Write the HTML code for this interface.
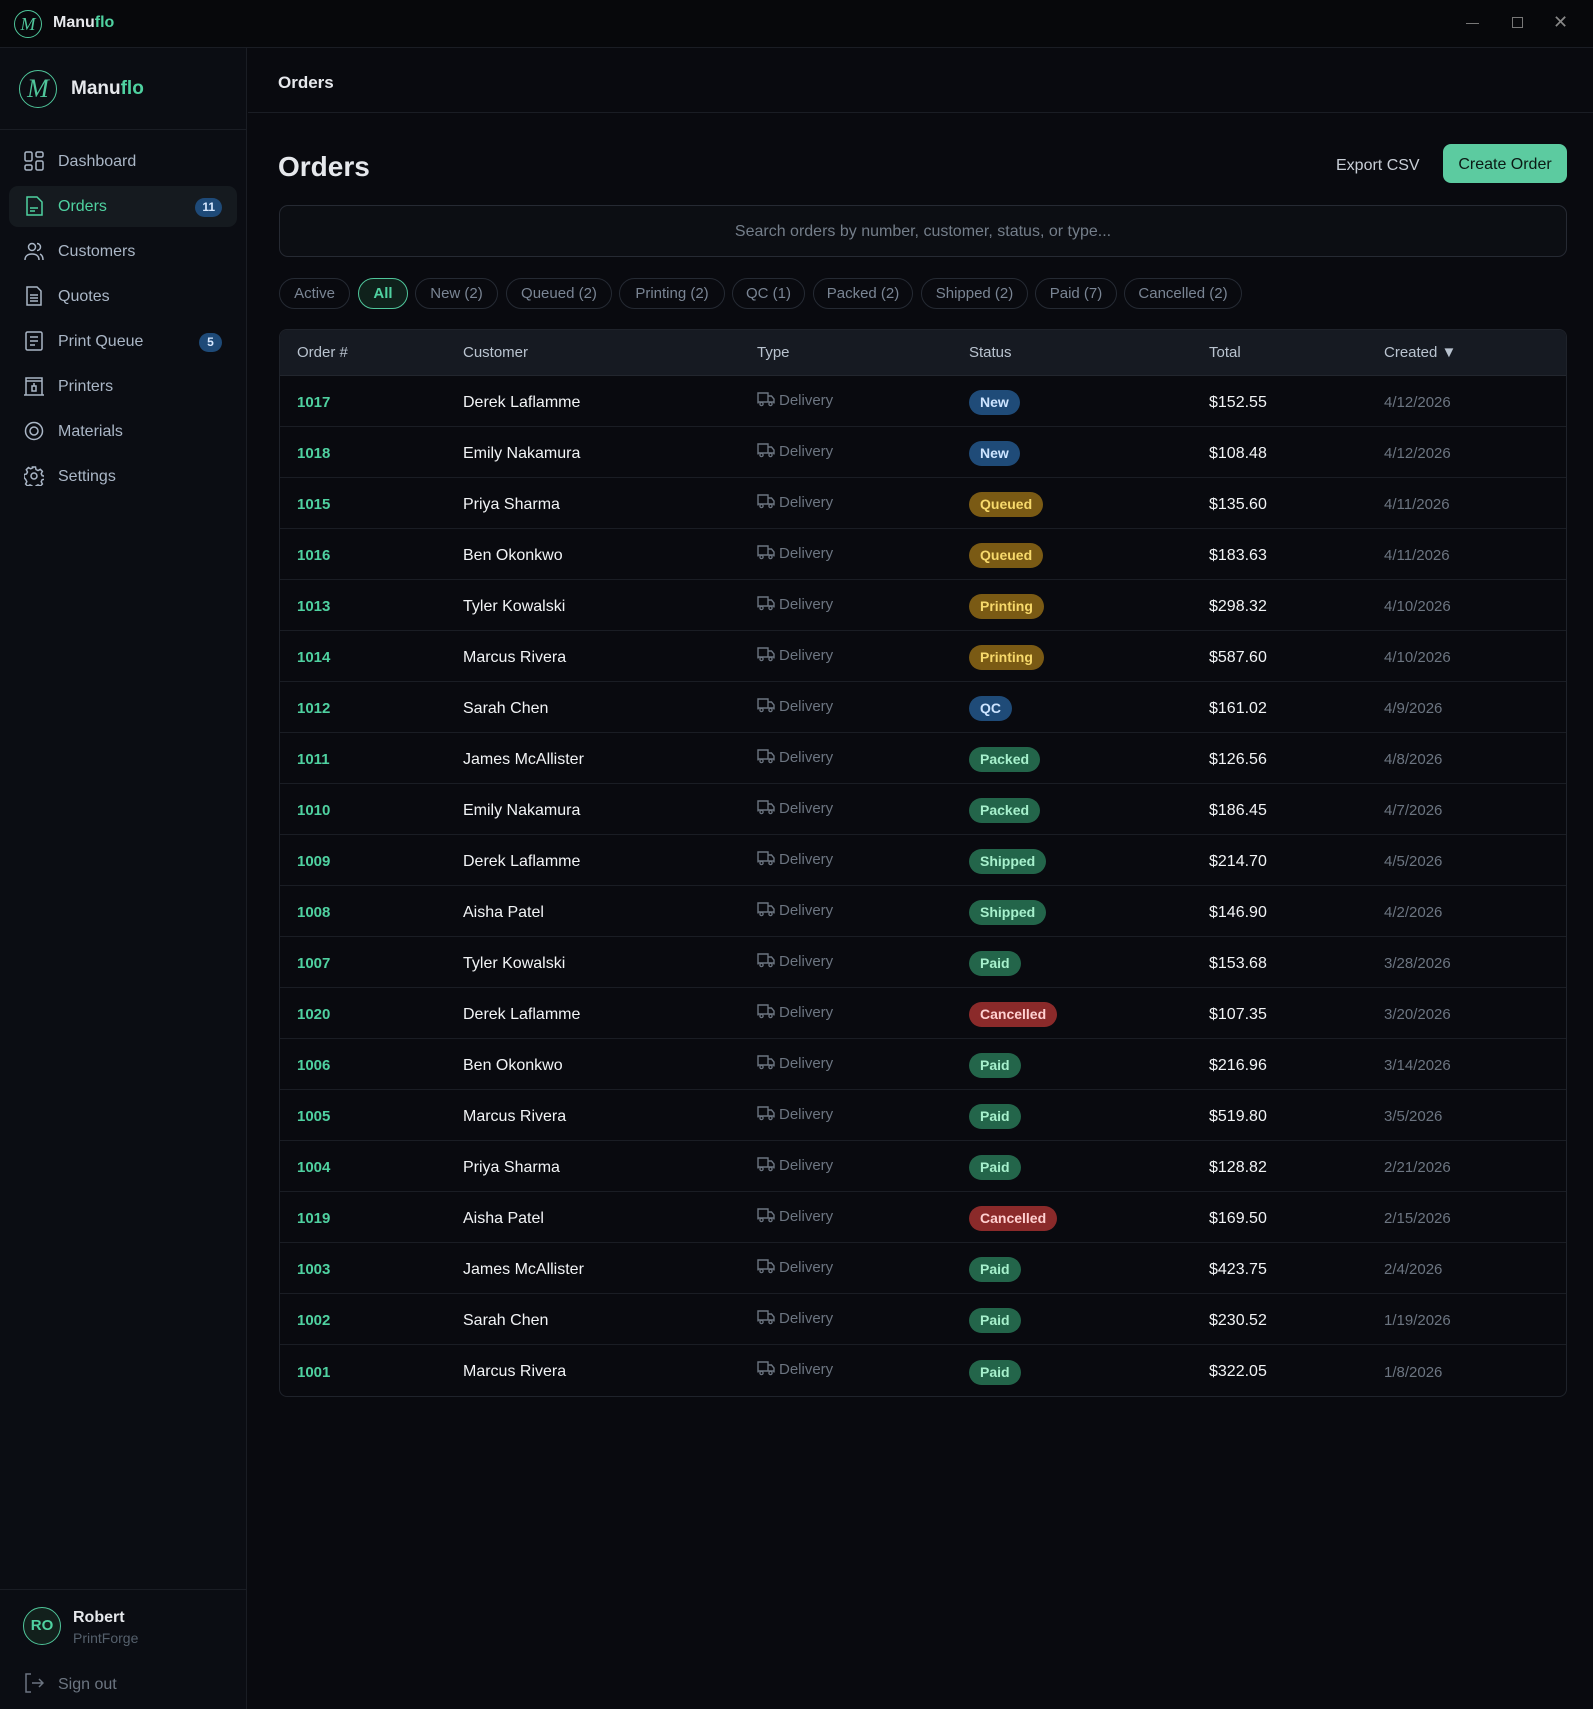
<!DOCTYPE html>
<html><head><meta charset="utf-8"><style>
*{box-sizing:border-box;margin:0;padding:0}
body{width:1593px;height:1709px;background:#090a0f;font-family:"Liberation Sans",sans-serif;color:#e6e8ec;position:relative;overflow:hidden}
.abs{position:absolute}
.titlebar{left:0;top:0;width:1593px;height:48px;background:#07080b;border-bottom:1px solid #1a1d24}
.sidebar{left:0;top:48px;width:247px;height:1661px;background:#0b0d13;border-right:1px solid #1a1d24}
.logo{display:inline-block;border:1.5px solid #4fc59a;border-radius:50%;color:#4fc59a;font-family:"Liberation Serif",serif;font-style:italic;text-align:center}
.nav{position:absolute;left:9px;width:228px;height:41px;border-radius:9px;font-size:16px;color:#aab6c6}
.nav svg{position:absolute;left:15px;top:10px}
.nav span.t{position:absolute;left:49px;top:12px}
.nav .b{position:absolute;right:15px;top:12px;height:19px;min-width:23px;padding:0 7px;border-radius:10px;background:#1e4a78;color:#d7e8ff;font-size:12px;font-weight:bold;line-height:19px;text-align:center}
.chip{position:absolute;top:278px;height:31px;border:1px solid #252a33;border-radius:16px;font-size:15px;color:#7a8594;line-height:29px;text-align:center}
table{position:absolute;left:279px;top:329px;width:1288px;border-collapse:separate;border-spacing:0;border:1px solid #1f232b;border-radius:8px;overflow:hidden}
th{height:46px;background:#161a22;text-align:left;font-weight:normal;color:#b9c3cf;font-size:15px;border-bottom:1px solid #22262e}
td{height:51px;border-bottom:1px solid #1a1d24;font-size:16px;color:#f2f4f6;padding-top:3px}
tr:last-child td{border-bottom:none}
td.n{color:#4fd1a0;font-size:15px;font-weight:bold}
td.ty{color:#6c7581;font-size:15px;padding-top:0;padding-bottom:3px}
td.ty svg{vertical-align:-2px;margin-right:4px}
td.d{color:#6c7581;font-size:15px}
.bd{display:inline-block;height:25px;line-height:25px;padding:0 11px;border-radius:13px;font-weight:bold;font-size:14px}
.bl{background:#1f4b78;color:#cde4ff}.yl{background:#7a5a14;color:#f7d96b}.gr{background:#23654a;color:#a6f0cc}.rd{background:#8b2a2a;color:#ffd0d0}
</style></head><body>
<svg width="0" height="0" style="position:absolute"><defs><symbol id="trk" viewBox="0 0 18 16"><path d="M1 2h10v9H1zM11 5h3.5l2.5 3v3h-6M1 11v1.5M17 11v1.5" fill="none" stroke="#6c7581" stroke-width="1.4"/><circle cx="4.5" cy="13" r="1.6" fill="none" stroke="#6c7581" stroke-width="1.3"/><circle cx="13.5" cy="13" r="1.6" fill="none" stroke="#6c7581" stroke-width="1.3"/></symbol></defs></svg>
<div class="abs titlebar">
  <span class="logo abs" style="left:14px;top:10px;width:28px;height:28px;font-size:18px;line-height:26px">M</span>
  <span class="abs" style="left:53px;top:14px;font-size:16px;font-weight:bold">Manu<span style="color:#4fd1a0">flo</span></span>
  <span class="abs" style="left:1466px;top:23px;width:13px;height:1px;background:#777"></span>
  <span class="abs" style="left:1512px;top:17px;width:11px;height:11px;border:1px solid #777"></span>
  <span class="abs" style="left:1553px;top:12px;font-size:18px;color:#888">✕</span>
</div>
<div class="abs sidebar">
  <span class="logo abs" style="left:19px;top:22px;width:38px;height:38px;font-size:26px;line-height:35px">M</span>
  <span class="abs" style="left:71px;top:30px;font-size:19px;font-weight:bold">Manu<span style="color:#4fd1a0">flo</span></span>
  <div class="abs" style="left:0;top:81px;width:247px;height:1px;background:#1a1d24"></div>
  <div class="abs" style="left:0;top:1541px;width:247px;height:1px;background:#1a1d24"></div>
</div>
<div class="nav" style="top:141px"><svg width="20" height="20" fill="none" stroke="#aab6c6" stroke-width="1.5"><rect x="1" y="1" width="7" height="9" rx="1.5"/><rect x="12" y="1" width="7" height="5" rx="1.5"/><rect x="1" y="14" width="7" height="5" rx="1.5"/><rect x="12" y="10" width="7" height="9" rx="1.5"/></svg><span class="t">Dashboard</span></div>
<div class="nav" style="top:186px;background:#151a1f;color:#4fd1a0"><svg width="20" height="20" fill="none" stroke="#4fd1a0" stroke-width="1.5"><path d="M3 1h10l5 5v13H3z M6 12h8 M6 15h5"/></svg><span class="t">Orders</span><span class="b">11</span></div>
<div class="nav" style="top:231px"><svg width="20" height="20" fill="none" stroke="#aab6c6" stroke-width="1.5"><circle cx="8" cy="6" r="3.5"/><path d="M1 19c0-4 3-6 7-6s7 2 7 6M13 2.5a3.5 3.5 0 010 7M16 13c2 1 3 3 3 6"/></svg><span class="t">Customers</span></div>
<div class="nav" style="top:276px"><svg width="20" height="20" fill="none" stroke="#aab6c6" stroke-width="1.5"><path d="M3 1h10l4 4v14H3z M6 9h8 M6 12h8 M6 15h8"/></svg><span class="t">Quotes</span></div>
<div class="nav" style="top:321px"><svg width="20" height="20" fill="none" stroke="#aab6c6" stroke-width="1.5"><rect x="2" y="1" width="16" height="18" rx="1.5"/><path d="M6 6h8M6 10h8M6 14h5"/></svg><span class="t">Print Queue</span><span class="b">5</span></div>
<div class="nav" style="top:366px"><svg width="20" height="20" fill="none" stroke="#aab6c6" stroke-width="1.5"><path d="M2 19V2h16v17M0 19h20M2 5h16M8 10h4v5H8zM10 7v3"/></svg><span class="t">Printers</span></div>
<div class="nav" style="top:411px"><svg width="20" height="20" fill="none" stroke="#aab6c6" stroke-width="1.5"><circle cx="10" cy="10" r="8.5"/><circle cx="10" cy="10" r="4"/></svg><span class="t">Materials</span></div>
<div class="nav" style="top:456px"><svg width="20" height="20" fill="none" stroke="#aab6c6" stroke-width="1.5"><circle cx="10" cy="10" r="3"/><path d="M8.5 1h3l.5 2.5 2 1 2.3-1.2 2.1 2.1-1.2 2.3 1 2 2.5.5v3l-2.5.5-1 2 1.2 2.3-2.1 2.1-2.3-1.2-2 1-.5 2.5h-3l-.5-2.5-2-1-2.3 1.2-2.1-2.1 1.2-2.3-1-2L0 11.5v-3l2.5-.5 1-2-1.2-2.3 2.1-2.1 2.3 1.2 2-1z"/></svg><span class="t">Settings</span></div>
<div class="abs" style="left:23px;top:1607px;width:38px;height:38px;border:1.5px solid #4fc59a;border-radius:50%;background:#12201c;color:#4fd1a0;font-size:15px;font-weight:bold;text-align:center;line-height:35px">RO</div>
<div class="abs" style="left:73px;top:1609px;font-size:16px;font-weight:bold">Robert</div>
<div class="abs" style="left:73px;top:1630px;font-size:14px;color:#55606c">PrintForge</div>
<svg class="abs" style="left:24px;top:1673px" width="20" height="20" fill="none" stroke="#6c7581" stroke-width="1.5"><path d="M7 1H2v18h5M8 10h11M15 6l4 4-4 4"/></svg>
<div class="abs" style="left:58px;top:1676px;font-size:16px;color:#6c7581">Sign out</div>

<div class="abs" style="left:248px;top:48px;width:1345px;height:65px;border-bottom:1px solid #1a1d24"></div>
<div class="abs" style="left:278px;top:73px;font-size:17px;font-weight:bold">Orders</div>
<div class="abs" style="left:278px;top:151px;font-size:28px;font-weight:bold">Orders</div>
<div class="abs" style="left:1336px;top:157px;font-size:16px;color:#c8ced6">Export CSV</div>
<div class="abs" style="left:1443px;top:144px;width:124px;height:39px;border-radius:8px;background:#5ccba0;color:#0b1a14;font-size:16px;text-align:center;line-height:41px">Create Order</div>
<div class="abs" style="left:279px;top:205px;width:1288px;height:52px;border:1px solid #262a33;border-radius:9px;background:#0c0e13;text-align:center;line-height:52px;font-size:16px;color:#747e8a">Search orders by number, customer, status, or type...</div>

<div class="chip" style="left:279px;width:71px">Active</div>
<div class="chip" style="left:358px;width:50px;border-color:#4fc59a;background:#0f211b;color:#4fd1a0;font-weight:bold">All</div>
<div class="chip" style="left:415px;width:83px">New (2)</div>
<div class="chip" style="left:506px;width:106px">Queued (2)</div>
<div class="chip" style="left:619px;width:106px">Printing (2)</div>
<div class="chip" style="left:732px;width:73px">QC (1)</div>
<div class="chip" style="left:813px;width:100px">Packed (2)</div>
<div class="chip" style="left:921px;width:107px">Shipped (2)</div>
<div class="chip" style="left:1035px;width:82px">Paid (7)</div>
<div class="chip" style="left:1124px;width:118px">Cancelled (2)</div>

<table>
<colgroup><col style="width:183px"><col style="width:294px"><col style="width:212px"><col style="width:240px"><col style="width:175px"><col></colgroup>
<tr><th style="padding-left:17px">Order #</th><th>Customer</th><th>Type</th><th>Status</th><th>Total</th><th>Created ▼</th></tr>
<tbody>
<tr><td class="n" style="padding-left:17px">1017</td><td>Derek Laflamme</td><td class="ty"><svg width="18" height="16"><use href="#trk"/></svg>Delivery</td><td><span class="bd bl">New</span></td><td>$152.55</td><td class="d">4/12/2026</td></tr>
<tr><td class="n" style="padding-left:17px">1018</td><td>Emily Nakamura</td><td class="ty"><svg width="18" height="16"><use href="#trk"/></svg>Delivery</td><td><span class="bd bl">New</span></td><td>$108.48</td><td class="d">4/12/2026</td></tr>
<tr><td class="n" style="padding-left:17px">1015</td><td>Priya Sharma</td><td class="ty"><svg width="18" height="16"><use href="#trk"/></svg>Delivery</td><td><span class="bd yl">Queued</span></td><td>$135.60</td><td class="d">4/11/2026</td></tr>
<tr><td class="n" style="padding-left:17px">1016</td><td>Ben Okonkwo</td><td class="ty"><svg width="18" height="16"><use href="#trk"/></svg>Delivery</td><td><span class="bd yl">Queued</span></td><td>$183.63</td><td class="d">4/11/2026</td></tr>
<tr><td class="n" style="padding-left:17px">1013</td><td>Tyler Kowalski</td><td class="ty"><svg width="18" height="16"><use href="#trk"/></svg>Delivery</td><td><span class="bd yl">Printing</span></td><td>$298.32</td><td class="d">4/10/2026</td></tr>
<tr><td class="n" style="padding-left:17px">1014</td><td>Marcus Rivera</td><td class="ty"><svg width="18" height="16"><use href="#trk"/></svg>Delivery</td><td><span class="bd yl">Printing</span></td><td>$587.60</td><td class="d">4/10/2026</td></tr>
<tr><td class="n" style="padding-left:17px">1012</td><td>Sarah Chen</td><td class="ty"><svg width="18" height="16"><use href="#trk"/></svg>Delivery</td><td><span class="bd bl">QC</span></td><td>$161.02</td><td class="d">4/9/2026</td></tr>
<tr><td class="n" style="padding-left:17px">1011</td><td>James McAllister</td><td class="ty"><svg width="18" height="16"><use href="#trk"/></svg>Delivery</td><td><span class="bd gr">Packed</span></td><td>$126.56</td><td class="d">4/8/2026</td></tr>
<tr><td class="n" style="padding-left:17px">1010</td><td>Emily Nakamura</td><td class="ty"><svg width="18" height="16"><use href="#trk"/></svg>Delivery</td><td><span class="bd gr">Packed</span></td><td>$186.45</td><td class="d">4/7/2026</td></tr>
<tr><td class="n" style="padding-left:17px">1009</td><td>Derek Laflamme</td><td class="ty"><svg width="18" height="16"><use href="#trk"/></svg>Delivery</td><td><span class="bd gr">Shipped</span></td><td>$214.70</td><td class="d">4/5/2026</td></tr>
<tr><td class="n" style="padding-left:17px">1008</td><td>Aisha Patel</td><td class="ty"><svg width="18" height="16"><use href="#trk"/></svg>Delivery</td><td><span class="bd gr">Shipped</span></td><td>$146.90</td><td class="d">4/2/2026</td></tr>
<tr><td class="n" style="padding-left:17px">1007</td><td>Tyler Kowalski</td><td class="ty"><svg width="18" height="16"><use href="#trk"/></svg>Delivery</td><td><span class="bd gr">Paid</span></td><td>$153.68</td><td class="d">3/28/2026</td></tr>
<tr><td class="n" style="padding-left:17px">1020</td><td>Derek Laflamme</td><td class="ty"><svg width="18" height="16"><use href="#trk"/></svg>Delivery</td><td><span class="bd rd">Cancelled</span></td><td>$107.35</td><td class="d">3/20/2026</td></tr>
<tr><td class="n" style="padding-left:17px">1006</td><td>Ben Okonkwo</td><td class="ty"><svg width="18" height="16"><use href="#trk"/></svg>Delivery</td><td><span class="bd gr">Paid</span></td><td>$216.96</td><td class="d">3/14/2026</td></tr>
<tr><td class="n" style="padding-left:17px">1005</td><td>Marcus Rivera</td><td class="ty"><svg width="18" height="16"><use href="#trk"/></svg>Delivery</td><td><span class="bd gr">Paid</span></td><td>$519.80</td><td class="d">3/5/2026</td></tr>
<tr><td class="n" style="padding-left:17px">1004</td><td>Priya Sharma</td><td class="ty"><svg width="18" height="16"><use href="#trk"/></svg>Delivery</td><td><span class="bd gr">Paid</span></td><td>$128.82</td><td class="d">2/21/2026</td></tr>
<tr><td class="n" style="padding-left:17px">1019</td><td>Aisha Patel</td><td class="ty"><svg width="18" height="16"><use href="#trk"/></svg>Delivery</td><td><span class="bd rd">Cancelled</span></td><td>$169.50</td><td class="d">2/15/2026</td></tr>
<tr><td class="n" style="padding-left:17px">1003</td><td>James McAllister</td><td class="ty"><svg width="18" height="16"><use href="#trk"/></svg>Delivery</td><td><span class="bd gr">Paid</span></td><td>$423.75</td><td class="d">2/4/2026</td></tr>
<tr><td class="n" style="padding-left:17px">1002</td><td>Sarah Chen</td><td class="ty"><svg width="18" height="16"><use href="#trk"/></svg>Delivery</td><td><span class="bd gr">Paid</span></td><td>$230.52</td><td class="d">1/19/2026</td></tr>
<tr><td class="n" style="padding-left:17px">1001</td><td>Marcus Rivera</td><td class="ty"><svg width="18" height="16"><use href="#trk"/></svg>Delivery</td><td><span class="bd gr">Paid</span></td><td>$322.05</td><td class="d">1/8/2026</td></tr>
</tbody></table>
</body></html>
